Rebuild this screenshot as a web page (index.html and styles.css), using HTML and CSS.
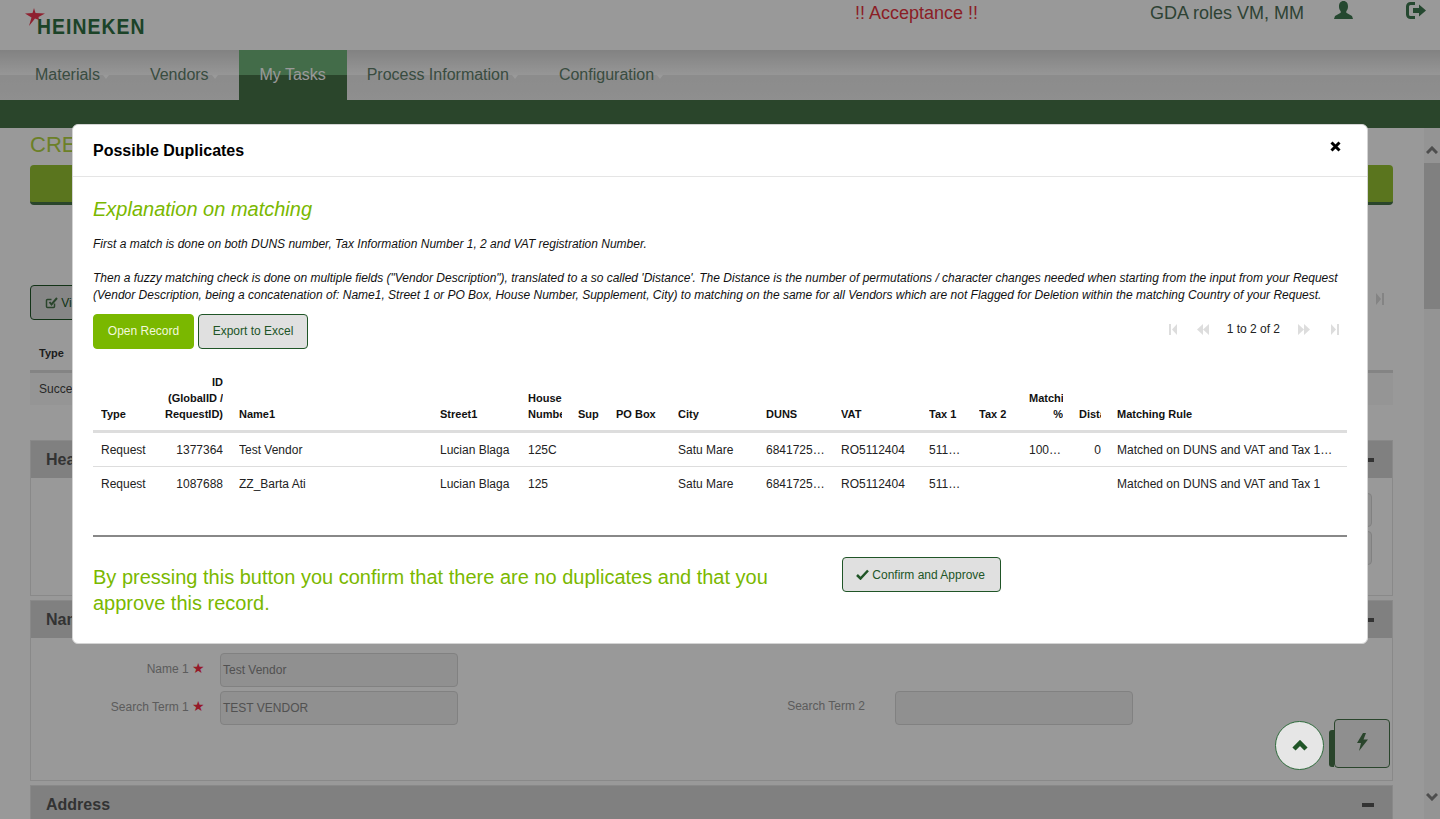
FILE: index.html
```html
<!DOCTYPE html>
<html lang="en">
<head>
  <meta charset="UTF-8">
  <meta name="viewport" content="width=device-width, initial-scale=1.0">
  <title>Heineken - Possible Duplicates</title>
  <link rel="stylesheet" href="styles.css">
</head>
<body>
  <div class="page">
    <header class="top">
      <div class="logo">
        <svg class="logo-star" viewBox="0 0 20 18"><polygon points="9,0 10.5,5 20,5.6 13.5,9 14,12 10,10.5 4,18 6.5,9.5 0,5.6 7.5,5"/></svg>
        <span class="logo-text">HEINEKEN</span>
      </div>
      <div class="env">!! Acceptance !!</div>
      <div class="roles">GDA roles VM, MM</div>
      <div class="user-icon">
        <svg width="19" height="18" viewBox="0 0 19 18"><path d="M9.5 0C6.5 0 5 2.3 5 5.5c0 2 .7 3.7 1.7 4.8v1.4L1 15 0 18h19l-1-3-5.7-3.3v-1.4c1-1.1 1.7-2.8 1.7-4.8C14 2.3 12.5 0 9.5 0z"/></svg>
      </div>
      <div class="logout-icon">
        <svg width="20" height="17" viewBox="0 0 20 17"><path class="logout-door" d="M9 1.5H4.5a3 3 0 0 0-3 3v8a3 3 0 0 0 3 3H9"/><path d="M7 6h6V2.5l7 6-7 6V11H7z"/></svg>
      </div>
    </header>

    <nav class="menu">
      <a class="menu-item">Materials<span class="caret"></span></a>
      <a class="menu-item">Vendors<span class="caret"></span></a>
      <a class="menu-item active">My Tasks</a>
      <a class="menu-item">Process Information<span class="caret"></span></a>
      <a class="menu-item">Configuration<span class="caret"></span></a>
    </nav>
    <div class="menu-bar"></div>

    <div class="main">
      <div class="content">
        <h1 class="page-title">CREATE</h1>
        <div class="action-bar"></div>

        <div class="toolbar">
          <button class="btn view-btn">
            <svg width="13" height="13" viewBox="0 0 13 13"><path class="edit-box" d="M9.5 7.5v3a1 1 0 0 1-1 1h-6a1 1 0 0 1-1-1v-6a1 1 0 0 1 1-1h4"/><path class="edit-tick" d="M4.5 6l2 2.5L12 2"/></svg>
            View
          </button>
          <svg class="pager-end" width="8" height="12" viewBox="0 0 8 12"><path d="M0 0l5 6-5 6zM6 0h2v12H6z"/></svg>
        </div>

        <table class="status-table">
          <thead><tr><th>Type</th></tr></thead>
          <tbody><tr><td>Success</td></tr></tbody>
        </table>

        <section class="panel panel-first">
          <div class="panel-head">Header<span class="collapse"></span></div>
          <div class="panel-body stack">
            <div class="field-input"></div>
            <div class="field-input"></div>
          </div>
        </section>

        <section class="panel">
          <div class="panel-head">Name<span class="collapse"></span></div>
          <div class="panel-body form-grid">
            <label class="field-label">Name 1 <span class="req">&#9733;</span></label>
            <div class="field-input">Test Vendor</div>
            <span></span><span></span>
            <label class="field-label">Search Term 1 <span class="req">&#9733;</span></label>
            <div class="field-input">TEST VENDOR</div>
            <label class="field-label plain">Search Term 2</label>
            <div class="field-input"></div>
          </div>
        </section>

        <section class="panel">
          <div class="panel-head">Address<span class="collapse"></span></div>
        </section>
      </div>

      <div class="scrollbar">
        <div class="scroll-arrow">
          <svg width="12" height="8" viewBox="0 0 12 8"><path d="M1 7l5-5 5 5"/></svg>
        </div>
        <div class="scroll-thumb"></div>
        <div class="scroll-rest"></div>
        <div class="scroll-arrow">
          <svg width="12" height="8" viewBox="0 0 12 8"><path d="M1 1l5 5 5-5"/></svg>
        </div>
      </div>
    </div>
  </div>

  <div class="backdrop"></div>

  <div class="float-actions">
    <button class="to-top">
      <svg width="16" height="11" viewBox="0 0 16 11"><path d="M2 9l6-6 6 6"/></svg>
    </button>
    <span class="flash-tab"></span>
    <button class="flash-btn">
      <svg width="12" height="18" viewBox="0 0 12 18"><polygon points="7,0 1,10 5,10 3,18 12,6.5 7.5,6.5 10,0"/></svg>
    </button>
  </div>

  <div class="modal">
    <div class="modal-head">
      <h4>Possible Duplicates</h4>
      <svg class="close" width="11" height="11" viewBox="0 0 11 11"><path d="M1.5 1.5l8 8M9.5 1.5l-8 8"/></svg>
    </div>
    <div class="modal-body">
      <h3 class="explain-title">Explanation on matching</h3>
      <p class="explain">First a match is done on both DUNS number, Tax Information Number 1, 2 and VAT registration Number.</p>
      <p class="explain explain-gap">Then a fuzzy matching check is done on multiple fields ("Vendor Description"), translated to a so called 'Distance'. The Distance is the number of permutations / character changes needed when starting from the input from your Request (Vendor Description, being a concatenation of: Name1, Street 1 or PO Box, House Number, Supplement, City) to matching on the same for all Vendors which are not Flagged for Deletion within the matching Country of your Request.</p>

      <div class="table-tools">
        <button class="btn btn-primary">Open Record</button>
        <button class="btn btn-export">Export to Excel</button>
        <div class="pager">
          <svg class="pg-first" width="8" height="11" viewBox="0 0 8 11"><path d="M0 0h2v11H0zM8 0v11L3 5.500z"/></svg>
          <svg class="pg-prev" width="12" height="11" viewBox="0 0 12 11"><path d="M6 0v11L0 5.500zM12 0v11L6 5.500z"/></svg>
          <span class="pg-text">1 to 2 of 2</span>
          <svg class="pg-next" width="12" height="11" viewBox="0 0 12 11"><path d="M0 0l6 5.500L0 11zM6 0l6 5.500L6 11z"/></svg>
          <svg class="pg-last" width="8" height="11" viewBox="0 0 8 11"><path d="M0 0l5 5.500L0 11zM6 0h2v11H6z"/></svg>
        </div>
      </div>

      <table class="data-table">
        <thead>
          <tr>
            <th class="c-type"><div class="cell">Type</div></th>
            <th class="c-id num"><div class="cell">ID (GlobalID / RequestID)</div></th>
            <th class="c-name"><div class="cell">Name1</div></th>
            <th class="c-street"><div class="cell">Street1</div></th>
            <th class="c-house"><div class="cell">House Number</div></th>
            <th class="c-sup"><div class="cell">Sup</div></th>
            <th class="c-pobox"><div class="cell">PO Box</div></th>
            <th class="c-city"><div class="cell">City</div></th>
            <th class="c-duns"><div class="cell">DUNS</div></th>
            <th class="c-vat"><div class="cell">VAT</div></th>
            <th class="c-tax"><div class="cell">Tax 1</div></th>
            <th class="c-tax"><div class="cell">Tax 2</div></th>
            <th class="c-match num"><div class="cell">Matching %</div></th>
            <th class="c-dist num"><div class="cell">Distance</div></th>
            <th class="c-rule"><div class="cell">Matching Rule</div></th>
          </tr>
        </thead>
        <tbody>
          <tr>
            <td><div class="cell">Request</div></td>
            <td class="num"><div class="cell">1377364</div></td>
            <td><div class="cell">Test Vendor</div></td>
            <td><div class="cell">Lucian Blaga</div></td>
            <td><div class="cell">125C</div></td>
            <td></td>
            <td></td>
            <td><div class="cell">Satu Mare</div></td>
            <td><div class="cell">684172512</div></td>
            <td><div class="cell">RO5112404</div></td>
            <td><div class="cell">5112404</div></td>
            <td></td>
            <td class="num"><div class="cell">100.000</div></td>
            <td class="num"><div class="cell">0</div></td>
            <td><div class="cell">Matched on DUNS and VAT and Tax 1&amp;Tax 2</div></td>
          </tr>
          <tr>
            <td><div class="cell">Request</div></td>
            <td class="num"><div class="cell">1087688</div></td>
            <td><div class="cell">ZZ_Barta Ati</div></td>
            <td><div class="cell">Lucian Blaga</div></td>
            <td><div class="cell">125</div></td>
            <td></td>
            <td></td>
            <td><div class="cell">Satu Mare</div></td>
            <td><div class="cell">684172512</div></td>
            <td><div class="cell">RO5112404</div></td>
            <td><div class="cell">5112404</div></td>
            <td></td>
            <td></td>
            <td></td>
            <td><div class="cell">Matched on DUNS and VAT and Tax 1</div></td>
          </tr>
        </tbody>
      </table>

      <hr class="divider">

      <div class="confirm">
        <p class="confirm-text">By pressing this button you confirm that there are no duplicates and that you approve this record.</p>
        <button class="btn confirm-btn">
          <svg width="13" height="11" viewBox="0 0 13 11"><path d="M1 6l3.500 3.500L12 1.500"/></svg>
          Confirm and Approve
        </button>
      </div>
    </div>
  </div>
</body>
</html>
```

FILE: styles.css
```css
* { box-sizing: border-box; }
html, body { height: 100%; }
body { margin: 0; background: #fff; color: #333; font-family: "Liberation Sans", Arial, sans-serif; font-size: 12px; overflow: hidden; }
button { font-family: inherit; }
h1, h3, h4, p { margin: 0; font-weight: normal; }

.page { height: 819px; display: flex; flex-direction: column; overflow: hidden; }

/* top header */
.top { height: 50px; flex: none; display: flex; align-items: flex-start; background: #fff; }
.logo { width: 855px; position: relative; padding: 14px 0 0 37px; }
.logo-star { position: absolute; left: 25px; top: 8px; width: 20px; height: 18px; fill: #ee3850; }
.logo-text { display: block; font-size: 22px; line-height: 26px; font-weight: bold; letter-spacing: 1.2px; color: #2f7043; transform: scaleX(.88); transform-origin: left; }
.env { width: 295px; font-size: 18px; line-height: 26px; color: #e8343f; }
.roles { width: 184px; font-size: 18px; line-height: 26px; color: #4d6f57; }
.user-icon { width: 72px; padding-top: 1px; }
.user-icon svg { fill: #3f7850; display: block; }
.logout-icon { padding-top: 2px; }
.logout-icon svg { fill: #3f7850; display: block; }
.logout-door { fill: none; stroke: #3f7850; stroke-width: 3; }

/* menu */
.menu { height: 50px; flex: none; display: flex; background: linear-gradient(#d9d9d9, #fbfbfb 50%, #e9e9e9 50%, #eeeeee); padding-left: 15px; }
.menu-item { display: flex; align-items: center; padding: 0 21px 0 20px; font-size: 16px; color: #5f7f6b; }
.caret { width: 0; height: 0; margin: 3px 0 0 3px; border-left: 3.5px solid transparent; border-right: 3.5px solid transparent; border-top: 4px solid #fff; }
.active { width: 108px; padding: 0; justify-content: center; background: linear-gradient(#71b47b 50%, #467349 50%); color: #fff; }
.menu-bar { height: 28px; flex: none; background: #467349; }

.main { flex: 1; min-height: 0; display: flex; overflow: hidden; }
.content { flex: 1; min-width: 0; padding: 5px 31px 0 30px; }

.page-title { font-size: 22px; line-height: 24px; color: #b4d644; }
.action-bar { height: 40px; margin-top: 8px; border-radius: 4px; background: #96c332; border-bottom: 3px solid #467349; }

.toolbar { display: flex; justify-content: space-between; align-items: flex-start; margin-top: 80px; }
.view-btn { background: #f5f5f5; border-color: #467349; }
.view-btn svg { vertical-align: -2px; }
.edit-box { fill: none; stroke: #467349; stroke-width: 1.500; }
.edit-tick { fill: none; stroke: #467349; stroke-width: 2; }
.pager-end { margin: 8px 9px 0 0; fill: #dcdcdc; }

.status-table { width: 100%; border-collapse: collapse; margin-top: 17px; }
.status-table th { text-align: left; font-size: 11px; line-height: 16px; padding: 8px 9px 9px; border-bottom: 3px solid #ddd; color: #333; }
.status-table td { padding: 8px 9px; line-height: 16px; background: #f9f9f9; color: #444; height: 32px; }

/* panels behind the dialog */
.panel { margin-top: 4px; border: 1px solid #e4e4e4; }
.panel-first { margin-top: 35px; }
.panel-head { height: 37px; display: flex; justify-content: space-between; align-items: center; padding: 0 18px 0 15px; background: #d5d5d5; font-size: 16px; font-weight: bold; color: #555; }
.collapse { width: 12px; height: 4px; background: #555; }
.panel-body { padding: 15px 20px 32px 0; }
.stack { display: flex; flex-direction: column; align-items: flex-end; gap: 4px; padding-bottom: 30px; }
.stack .field-input { width: 238px; }
.form-grid { display: grid; grid-template-columns: 174px 238px 407px 238px; column-gap: 15px; row-gap: 4px; padding-bottom: 55px; }
.field-label { text-align: right; line-height: 30px; color: #999; }
.field-label.plain { padding-right: 15px; line-height: 31px; }
.req { color: #fa2c44; font-size: 14px; }
.field-input { height: 34px; padding: 0 2px; line-height: 32px; background: #f0f0f0; border: 1px solid #d7d7d7; border-radius: 4px; color: #888; }

/* fake scrollbar */
.scrollbar { width: 16px; flex: none; display: flex; flex-direction: column; background: #f7f7f7; }
.scroll-arrow { height: 35px; flex: none; display: flex; align-items: center; justify-content: center; }
.scrollbar > .scroll-arrow:first-child { padding-top: 9px; }
.scrollbar > .scroll-arrow:last-child { height: 44px; }
.scroll-arrow svg { fill: none; stroke: #828282; stroke-width: 3; }
.scroll-thumb { height: 146px; flex: none; background: #d5d5d5; }
.scroll-rest { flex: 1; }

/* dialog */
.backdrop { position: fixed; inset: 0; background: rgba(0, 0, 0, .4); }
.modal { position: fixed; left: 72px; top: 124px; width: 1296px; background: #fff; border: 1px solid #d4d4d4; border-radius: 6px; }
.modal-head { height: 52px; display: flex; justify-content: space-between; align-items: flex-start; padding: 0 20px; border-bottom: 1px solid #e5e5e5; }
.modal-head h4 { font-size: 16px; font-weight: bold; line-height: 51px; color: #000; }
.close { margin: 16px 6px 0 0; stroke: #000; stroke-width: 3; }
.modal-body { padding: 20px; }
.explain-title { font-size: 20px; font-style: italic; line-height: 24px; color: #7ab800; }
.explain { margin-top: 15px; font-size: 12px; font-style: italic; line-height: 17px; color: #111; }
.explain-gap { margin-top: 17px; }

.btn { height: 35px; padding: 0 14px; border: 1px solid #205527; border-radius: 4px; background: #e0e0e0; color: #205527; font-size: 12px; white-space: nowrap; }
.btn-primary { width: 101px; padding: 0 0 2px; background: #7ab800; border-color: #7ab800; color: #f2f8dc; }
.btn-export { width: 110px; padding: 0 0 2px; }
.table-tools { display: flex; align-items: flex-start; gap: 4px; margin-top: 10px; }
.table-tools .btn { flex: none; }

.pager { margin-left: auto; display: flex; align-items: center; height: 30px; padding-right: 8px; fill: #ddd; color: #222; }
.pg-prev { margin-left: 20px; }
.pg-text { margin: 0 18px; }
.pg-last { margin-left: 21px; }

.data-table { width: 100%; table-layout: fixed; border-collapse: collapse; margin-top: 17px; color: #222; }
.data-table th { padding: 8px; font-size: 11px; line-height: 16px; text-align: left; vertical-align: bottom; color: #111; border-bottom: 3px solid #ddd; }
.data-table td { padding: 9px 8px 7px; height: 33px; line-height: 17px; white-space: nowrap; border-bottom: 1px solid #ddd; }
.data-table tbody tr:last-child td { border-bottom: 0; }
.data-table .num { text-align: right; }
.cell { overflow: hidden; }
.data-table td .cell { text-overflow: ellipsis; }
.c-type { width: 63px; }
.c-id { width: 75px; }
.c-name { width: 201px; }
.c-street { width: 88px; }
.c-house { width: 50px; }
.c-sup { width: 38px; }
.c-pobox { width: 62px; }
.c-city { width: 88px; }
.c-duns { width: 75px; }
.c-vat { width: 88px; }
.c-tax { width: 50px; }
.c-match { width: 50px; }
.c-dist { width: 38px; }
.c-rule { width: 238px; }

.divider { margin: 35px 0 0; height: 2px; border: 0; background: #888; }
.confirm { display: flex; align-items: flex-start; }
.confirm-text { width: 749px; flex: none; padding: 27px 60px 7px 0; font-size: 20px; line-height: 26px; color: #7ab800; }
.confirm-btn { width: 159px; margin-top: 20px; padding: 0 2px 0 0; }
.confirm-btn svg { vertical-align: -1px; fill: none; stroke: #205527; stroke-width: 2.500; }

/* floating buttons, sit on top of the backdrop */
.float-actions { position: fixed; right: 50px; bottom: 49px; display: flex; align-items: flex-start; }
.to-top { width: 49px; height: 49px; margin-top: 2px; padding: 0; border: 1px solid #2f6b3c; border-radius: 50%; background: #e6e6e6; display: flex; align-items: center; justify-content: center; }
.to-top svg { fill: none; stroke: #205527; stroke-width: 4.500; }
.flash-tab { width: 5px; height: 37px; margin: 11px 0 0 5px; background: #2a452c; border-radius: 3px 0 0 3px; }
.flash-btn { width: 56px; height: 49px; padding: 0 0 3px; border: 1px solid #2a452c; border-radius: 4px; background: #8f8f8f; display: flex; align-items: center; justify-content: center; }
.flash-btn svg { fill: #2a452c; }
```
